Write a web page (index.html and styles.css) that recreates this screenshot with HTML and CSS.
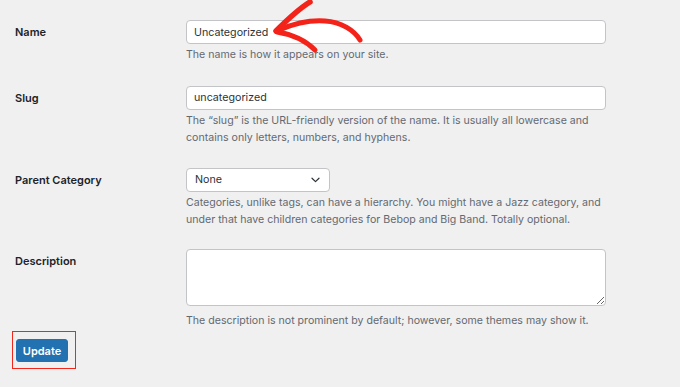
FILE: index.html
```html
<!DOCTYPE html>
<html>
<head>
<meta charset="utf-8">
<link rel="stylesheet" href="styles.css">
</head>
<body>
<form class="form">
  <div class="row row-name">
    <label class="label">Name</label>
    <div class="field">
      <input class="input" type="text" value="Uncategorized">
      <p class="help">The name is how it appears on your site.</p>
    </div>
  </div>
  <div class="row row-slug">
    <label class="label">Slug</label>
    <div class="field">
      <input class="input" type="text" value="uncategorized">
      <p class="help">The “slug” is the URL-friendly version of the name. It is usually all lowercase and contains only letters, numbers, and hyphens.</p>
    </div>
  </div>
  <div class="row row-parent">
    <label class="label">Parent Category</label>
    <div class="field">
      <div class="select">
        <span>None</span>
        <svg class="chev" width="9" height="6" viewBox="0 0 9 6"><path d="M1 1.2 L4.5 4.6 L8 1.2" fill="none" stroke="#2c3338" stroke-width="1.2" stroke-linecap="round" stroke-linejoin="round"/></svg>
      </div>
      <p class="help">Categories, unlike tags, can have a hierarchy. You might have a Jazz category, and under that have children categories for Bebop and Big Band. Totally optional.</p>
    </div>
  </div>
  <div class="row row-desc">
    <label class="label">Description</label>
    <div class="field">
      <textarea class="textarea"></textarea>
      <p class="help help-desc">The description is not prominent by default; however, some themes may show it.</p>
    </div>
  </div>
  <div class="actions">
    <div class="highlight">
      <button type="button" class="button">Update</button>
    </div>
  </div>
</form>
<svg class="arrow" width="680" height="387" viewBox="0 0 680 387">
  <g fill="none" stroke="#f4231a" stroke-linecap="round" stroke-linejoin="round">
    <path d="M279 30 C293 24 311 20 325 21 C341 22 354 30 360 40" stroke-width="5"/>
    <path d="M276 31 C286 21 297 10 310 2" stroke-width="5.5"/>
    <path d="M277 32 C290 34 304 39 315 50" stroke-width="5"/>
  </g>
</svg>
</body>
</html>
```
FILE: styles.css
```css
html, body {
  margin: 0;
  padding: 0;
}
body {
  background: #f0f0f1;
  font-family: Inter, "Liberation Sans", sans-serif;
  color: #1d2327;
  width: 680px;
  height: 387px;
  overflow: hidden;
  position: relative;
}
.form {
  display: flex;
  flex-direction: column;
  padding: 20px 0 0 15px;
}
.row {
  display: grid;
  grid-template-columns: 171px 425px;
  align-items: start;
}
.row-slug { margin-top: 22px; }
.row-parent { margin-top: 21px; }
.row-desc { margin-top: 20px; }
.label {
  font-size: 11px;
  font-weight: 600;
  line-height: 24px;
  color: #1d2327;
}
.field {
  display: flex;
  flex-direction: column;
  align-items: flex-start;
}
.input {
  box-sizing: border-box;
  width: 420px;
  height: 24px;
  margin: 0;
  padding: 0 7px;
  border: 1px solid #c3c4c7;
  border-radius: 4px;
  background: #fff;
  font-family: Inter, "Liberation Sans", sans-serif;
  font-size: 10.7px;
  color: #2c3338;
  outline: none;
}
.select {
  box-sizing: border-box;
  width: 144px;
  height: 24px;
  padding: 0 9px 0 8px;
  border: 1px solid #c3c4c7;
  border-radius: 4px;
  background: #fff;
  display: flex;
  align-items: center;
  justify-content: space-between;
  font-size: 10.7px;
  color: #2c3338;
}
.chev { display: block; }
.textarea {
  box-sizing: border-box;
  display: block;
  width: 420px;
  height: 57px;
  margin: 0;
  border: 1px solid #c3c4c7;
  border-radius: 4px;
  background: #fff;
  outline: none;
}
.help {
  margin: 2px 0 0;
  font-size: 10.6px;
  line-height: 17.5px;
  color: #646970;
  width: 425px;
}
.help-desc { margin-top: 6px; }
.actions {
  margin-top: 2px;
  display: flex;
}
.highlight {
  margin-left: -3px;
  padding: 7px 7px 6px 3px;
  border: 1.5px solid #f3261b;
}
.button {
  display: block;
  box-sizing: border-box;
  width: 52px;
  height: 23px;
  margin: 0;
  padding: 0;
  border: 1px solid #2271b1;
  border-radius: 3px;
  background: #2271b1;
  color: #fff;
  font-family: Inter, "Liberation Sans", sans-serif;
  font-size: 11px;
  font-weight: 600;
}
.arrow {
  position: absolute;
  left: 0;
  top: 0;
  pointer-events: none;
}
```
